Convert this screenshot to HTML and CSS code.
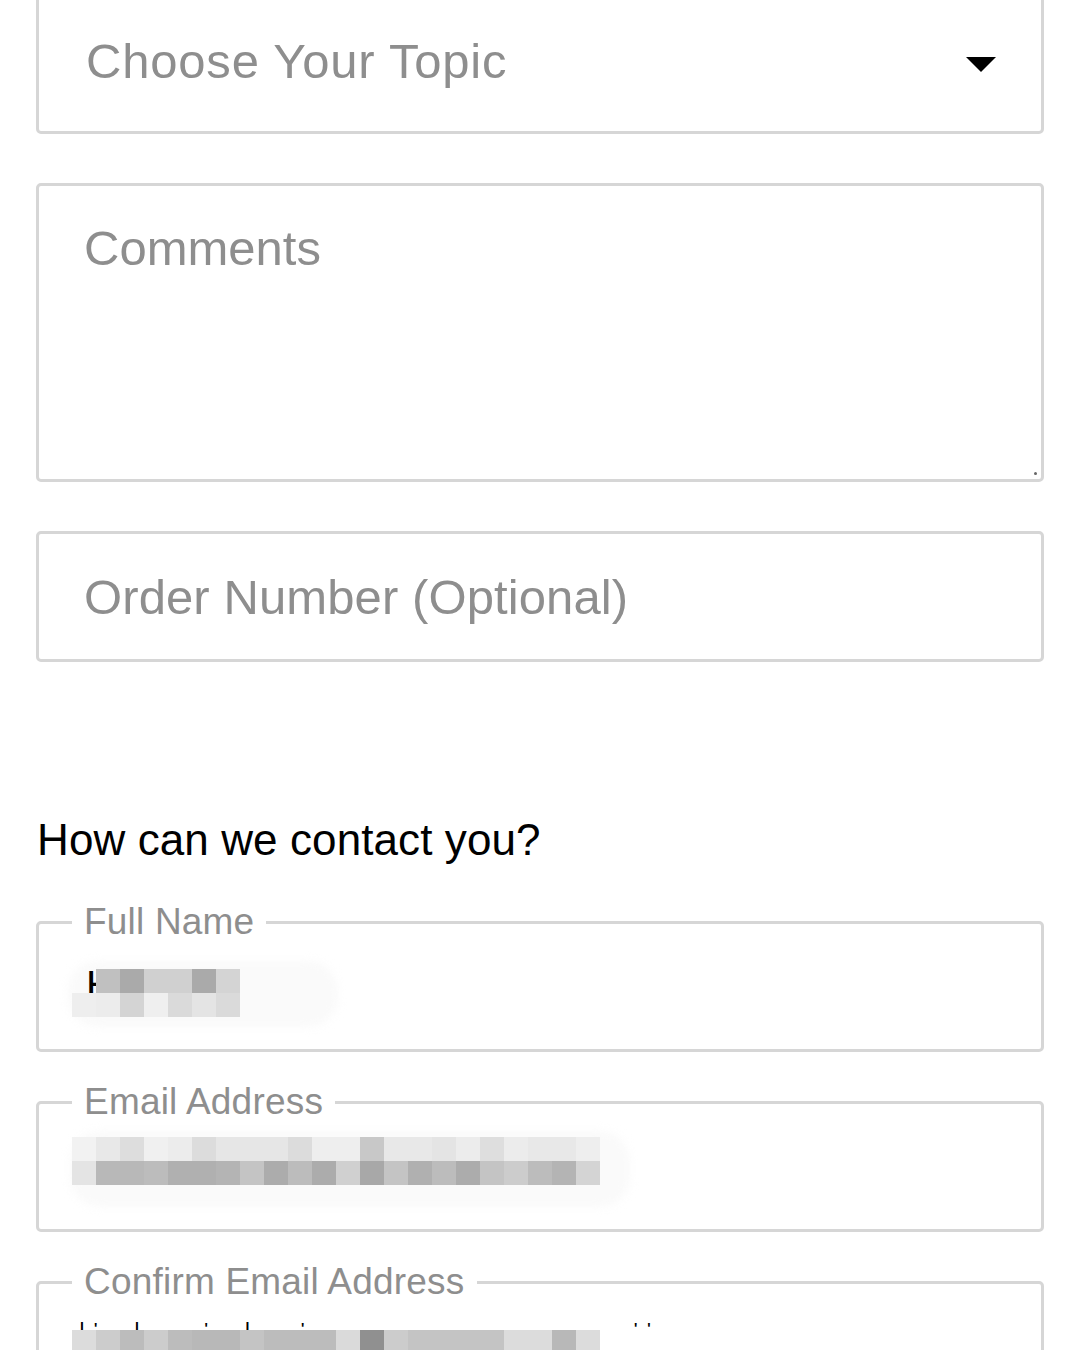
FILE: index.html
```html
<!DOCTYPE html>
<html lang="en">
<head>
<meta charset="utf-8">
<title>Contact form</title>
<link rel="stylesheet" href="styles.css">
</head>
<body>
<main class="form">
  <div class="box select">
    <span class="ph ph-select">Choose Your Topic</span>
    <svg class="caret" width="30" height="15" viewBox="0 0 30 15" aria-hidden="true"><path d="M0 0H30L15 15Z" fill="#000"/></svg>
  </div>

  <div class="box textarea">
    <span class="ph">Comments</span>
    <span class="grip"></span>
  </div>

  <div class="box input">
    <span class="ph">Order Number (Optional)</span>
  </div>

  <h2 class="heading">How can we contact you?</h2>

  <div class="box field field-name">
    <span class="legend">Full Name</span>
    <div class="value">
      <span class="smear smear-name"></span>
      <span class="typed">H</span>
      <div class="pix">
        <i class="g-00"></i><i class="g-c0"></i><i class="g-aa"></i><i class="g-d0"></i><i class="g-d0"></i><i class="g-aa"></i><i class="g-d4"></i>
        <i class="g-ee"></i><i class="g-ec"></i><i class="g-d4"></i><i class="g-ef"></i><i class="g-da"></i><i class="g-e4"></i><i class="g-da"></i>
      </div>
    </div>
  </div>

  <div class="box field field-email">
    <span class="legend">Email Address</span>
    <div class="value">
      <span class="smear smear-email"></span>
      <div class="pix">
        <i class="g-f2"></i><i class="g-e8"></i><i class="g-dd"></i><i class="g-f0"></i><i class="g-ec"></i><i class="g-dc"></i><i class="g-e6"></i><i class="g-e6"></i><i class="g-e6"></i><i class="g-dc"></i><i class="g-ee"></i><i class="g-ee"></i><i class="g-c8"></i><i class="g-e8"></i><i class="g-e8"></i><i class="g-e4"></i><i class="g-ec"></i><i class="g-de"></i><i class="g-ec"></i><i class="g-e8"></i><i class="g-e8"></i><i class="g-ee"></i>
        <i class="g-e4"></i><i class="g-b8"></i><i class="g-b8"></i><i class="g-bc"></i><i class="g-b0"></i><i class="g-b0"></i><i class="g-b4"></i><i class="g-c4"></i><i class="g-ac"></i><i class="g-bc"></i><i class="g-ac"></i><i class="g-d0"></i><i class="g-a8"></i><i class="g-c4"></i><i class="g-b0"></i><i class="g-bc"></i><i class="g-ac"></i><i class="g-c4"></i><i class="g-cc"></i><i class="g-bc"></i><i class="g-b4"></i><i class="g-d4"></i>
      </div>
    </div>
  </div>

  <div class="box field field-confirm">
    <span class="legend">Confirm Email Address</span>
    <div class="value">
      <span class="ticks">l' &nbsp;l &nbsp; &nbsp;' &nbsp;l &nbsp; ' &nbsp; &nbsp; &nbsp; &nbsp; &nbsp; &nbsp; &nbsp; &nbsp; &nbsp; &nbsp; &nbsp; ''</span>
      <div class="pix">
        <i class="g-dc"></i><i class="g-cc"></i><i class="g-bc"></i><i class="g-cc"></i><i class="g-bc"></i><i class="g-b8"></i><i class="g-b8"></i><i class="g-c4"></i><i class="g-bc"></i><i class="g-bc"></i><i class="g-bc"></i><i class="g-da"></i><i class="g-90"></i><i class="g-cc"></i><i class="g-c4"></i><i class="g-c4"></i><i class="g-c4"></i><i class="g-c4"></i><i class="g-dc"></i><i class="g-dc"></i><i class="g-b8"></i><i class="g-dc"></i>
      </div>
    </div>
  </div>
</main>
</body>
</html>
```

FILE: styles.css
```css
* { box-sizing: border-box; }

html, body {
  margin: 0;
  padding: 0;
  background: #ffffff;
  overflow: hidden;
}

body {
  font-family: "Liberation Sans", Arial, Helvetica, sans-serif;
  width: 1080px;
  height: 1350px;
}

.form {
  padding: 0 36px;
  display: flex;
  flex-direction: column;
}

.box {
  position: relative;
  border: 3px solid #d6d6d6;
  border-radius: 5px;
  background: #fff;
  display: flex;
  align-items: center;
  padding-left: 45px;
}

.ph {
  font-size: 49px;
  color: #8e8e8e;
  line-height: 56px;
  white-space: nowrap;
}

.select {
  margin-top: -6px;
  height: 140px;
  padding-left: 47px;
  padding-bottom: 6px;
  justify-content: space-between;
  padding-right: 45px;
}

.ph-select { letter-spacing: 0.8px; }

.caret {
  display: block;
  flex: none;
  margin-top: 6px;
}

.textarea {
  margin-top: 49px;
  height: 299px;
  align-items: flex-start;
  padding-top: 34px;
}

.grip {
  position: absolute;
  right: 4px;
  bottom: 4px;
  width: 3px;
  height: 3px;
  border-radius: 50%;
  background: #666;
}

.input {
  margin-top: 49px;
  height: 131px;
}

.input .ph { letter-spacing: 0.1px; }

.heading {
  margin: 153px 0 0 1px;
  font-size: 44px;
  line-height: 50px;
  font-weight: 400;
  color: #000;
  letter-spacing: 0.1px;
}

.field {
  height: 131px;
  align-items: flex-start;
  padding-left: 33px;
}

.field-name { margin-top: 56px; }
.field-email { margin-top: 49px; }
.field-confirm { margin-top: 49px; }

.legend {
  position: absolute;
  left: 33px;
  top: -24px;
  padding: 0 12px;
  background: #fff;
  font-size: 37px;
  line-height: 44px;
  color: #8e8e8e;
  white-space: nowrap;
  letter-spacing: 0.2px;
}

.value {
  position: relative;
  height: 48px;
  width: 560px;
}

.field-name .value { margin-top: 45px; }
.field-email .value { margin-top: 33px; }
.field-confirm .value { margin-top: 46px; }

.pix {
  position: relative;
  display: grid;
  grid-template-columns: repeat(7, 24px);
  grid-auto-rows: 24px;
}

.field-email .pix,
.field-confirm .pix { grid-template-columns: repeat(22, 24px); }

.pix i { display: block; }

.typed {
  position: absolute;
  left: 14px;
  top: -6px;
  font-size: 40px;
  line-height: 44px;
  color: #000;
}

.ticks {
  position: absolute;
  left: 8px;
  top: -10px;
  font-size: 14px;
  font-weight: 700;
  color: #000;
  white-space: pre;
  letter-spacing: 10px;
}

.smear {
  position: absolute;
  background: #fafafa;
  border-radius: 30px;
  filter: blur(4px);
}

.smear-name { left: -4px; top: -8px; width: 270px; height: 66px; }
.smear-email { left: -2px; top: -6px; width: 560px; height: 76px; }

.g-00 { background: transparent; }
.g-90 { background: #909090; }
.g-a8 { background: #a8a8a8; }
.g-aa { background: #aaaaaa; }
.g-ac { background: #acacac; }
.g-b0 { background: #b0b0b0; }
.g-b4 { background: #b4b4b4; }
.g-b8 { background: #b8b8b8; }
.g-bc { background: #bcbcbc; }
.g-c0 { background: #c0c0c0; }
.g-c4 { background: #c4c4c4; }
.g-c8 { background: #c8c8c8; }
.g-cc { background: #cccccc; }
.g-d0 { background: #d0d0d0; }
.g-d4 { background: #d4d4d4; }
.g-da { background: #dadada; }
.g-dc { background: #dcdcdc; }
.g-dd { background: #dddddd; }
.g-de { background: #dedede; }
.g-e4 { background: #e4e4e4; }
.g-e6 { background: #e6e6e6; }
.g-e8 { background: #e8e8e8; }
.g-ec { background: #ececec; }
.g-ee { background: #eeeeee; }
.g-ef { background: #efefef; }
.g-f0 { background: #f0f0f0; }
.g-f2 { background: #f2f2f2; }
```
